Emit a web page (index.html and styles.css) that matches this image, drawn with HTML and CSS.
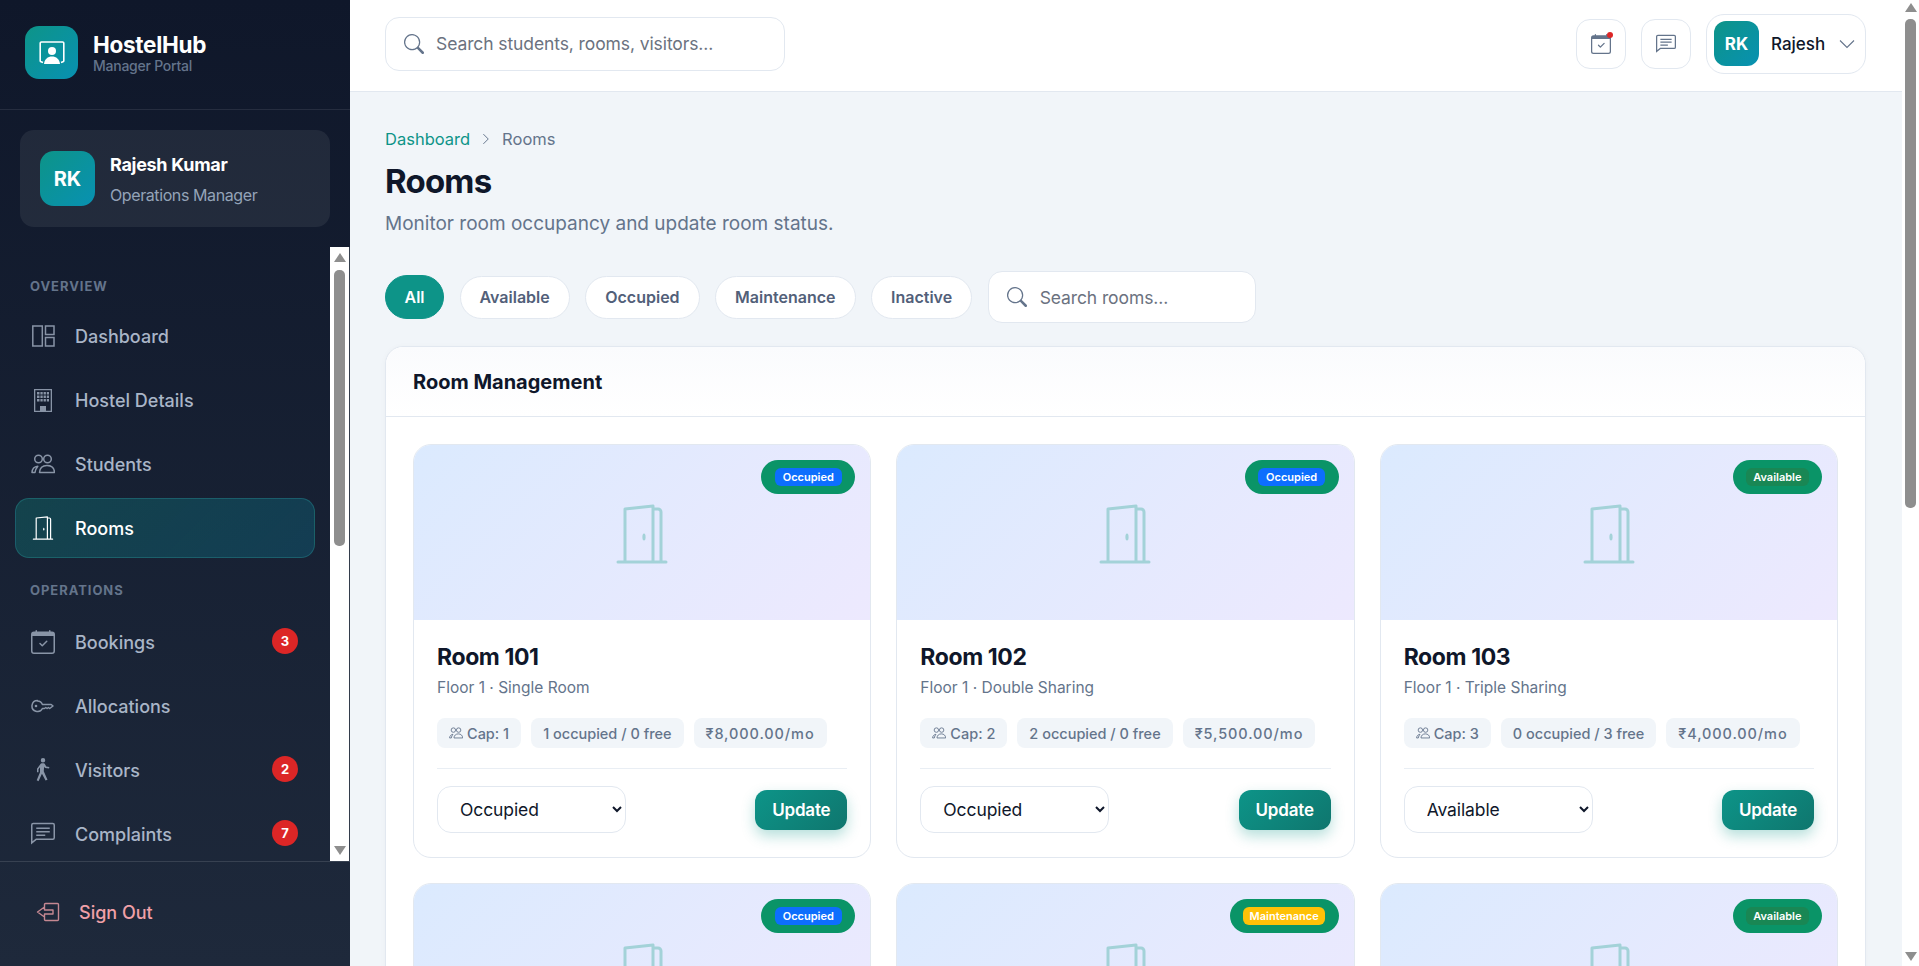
FILE: index.html
```html
<!DOCTYPE html>
<html lang="en">
<head>
<meta charset="utf-8">
<title>Rooms - HostelHub</title>
<link rel="stylesheet" href="styles.css">
</head>
<body>
<svg class="defs" width="0" height="0" aria-hidden="true">
  <symbol id="i-door" viewBox="0 0 52 60"><path fill="none" stroke="currentColor" stroke-width="3" stroke-linecap="round" stroke-linejoin="round" d="M2 58h48M9 58V5l28-3v56M37 5h5a3 3 0 0 1 3 3v50"/><ellipse cx="28" cy="33" rx="1.600" ry="3.500" fill="currentColor"/></symbol>
  <symbol id="i-people" viewBox="0 0 24 24"><g fill="none" stroke="currentColor" stroke-width="1.500" stroke-linejoin="round"><circle cx="7.500" cy="7" r="3.800"/><circle cx="16.500" cy="7" r="3.800"/><path d="M8.500 20.500c.3-4.500 3.300-7 7.500-7s7.300 2.500 7.500 7z"/><path d="M1 20.500c.2-3.500 2.500-6 5.800-6.300-1.500 1.800-2.500 3.800-2.800 6.300z"/></g></symbol>
  <symbol id="i-chat" viewBox="0 0 16 16"><path fill="currentColor" d="M14.500 1.500h-13a.5.5 0 0 0-.5.5v10.800L3.300 11h11.200a.5.5 0 0 0 .5-.5V2a.5.500 0 0 0-.5-.5M1.500.5h13A1.500 1.500 0 0 1 16 2v8.500a1.500 1.500 0 0 1-1.500 1.500H3.700L0 15V2A1.500 1.500 0 0 1 1.500.5M3.500 3.700h9v1h-9zm0 2.300h9v1h-9zm0 2.300h6v1h-6z"/></symbol>
  <symbol id="i-cal" viewBox="0 0 16 16"><path fill="currentColor" d="M10.854 7.146a.5.5 0 0 1 0 .708l-3 3a.5.5 0 0 1-.708 0l-1.500-1.500a.5.500 0 1 1 .708-.708L7.500 9.793l2.646-2.647a.5.500 0 0 1 .708 0"/><path fill="currentColor" d="M3.500 0a.5.500 0 0 1 .5.500V1h8V.500a.5.500 0 0 1 1 0V1h1a2 2 0 0 1 2 2v11a2 2 0 0 1-2 2H2a2 2 0 0 1-2-2V3a2 2 0 0 1 2-2h1V.500a.5.500 0 0 1 .5-.5M1 4v10a1 1 0 0 0 1 1h12a1 1 0 0 0 1-1V4z"/></symbol>
  <symbol id="i-search" viewBox="0 0 16 16"><path fill="currentColor" d="M11.742 10.344a6.500 6.500 0 1 0-1.397 1.398h-.001q.044.060.098.115l3.850 3.850a1 1 0 0 0 1.415-1.414l-3.850-3.850a1 1 0 0 0-.115-.1zM12 6.500a5.500 5.500 0 1 1-11 0 5.500 5.500 0 0 1 11 0"/></symbol>
</svg>

<div class="app">
  <aside class="sidebar">
    <div class="brand">
      <div class="brand-logo">
        <svg viewBox="0 0 26 24" width="26" height="24"><path fill="none" stroke="#fff" stroke-width="1.600" stroke-linejoin="round" d="M4 21.500 2 20.800a1 1 0 0 1-.8-1V2.200a1.200 1.200 0 0 1 1.200-1.200h21.200a1.200 1.200 0 0 1 1.200 1.200v17.600a1 1 0 0 1-.8 1l-2 .7"/><circle cx="13" cy="10" r="4" fill="#fff"/><path fill="#fff" d="M5 23c.5-5 3.800-7.500 8-7.500s7.500 2.500 8 7.500z"/></svg>
      </div>
      <div class="brand-text">
        <div class="brand-name">HostelHub</div>
        <div class="brand-sub">Manager Portal</div>
      </div>
    </div>

    <div class="profile">
      <div class="avatar avatar-lg">RK</div>
      <div class="profile-text">
        <div class="profile-name">Rajesh Kumar</div>
        <div class="profile-role">Operations Manager</div>
      </div>
    </div>

    <div class="nav-area">
      <nav class="nav">
        <div class="nav-label">OVERVIEW</div>
        <a class="nav-item"><svg class="nav-icon" viewBox="0 0 24 24"><path fill="none" stroke="currentColor" stroke-width="1.500" d="M1.800 2h9.500v20H1.800zM14.500 2h8.500v8.500h-8.500zM14.500 13.500h8.500V22h-8.500z"/></svg><span>Dashboard</span></a>
        <a class="nav-item"><svg class="nav-icon" viewBox="0 0 24 24"><path fill="currentColor" fill-rule="evenodd" d="M3 1h18v23H3zm1.300 1.300v20.400h4.700V18h6v4.700h4.700V2.300z"/><path fill="currentColor" d="M6 4h2.500v2.500H6zm3.400 0h2.300v2.500H9.400zm3.200 0h2.300v2.500h-2.300zm3.200 0H18v2.500h-2.200zM6 7.500h2.500V10H6zm3.400 0h2.300V10H9.400zm3.200 0h2.300V10h-2.300zm3.200 0H18V10h-2.200zM6 11h2.500v2.500H6zm3.400 0h2.300v2.500H9.400zm3.200 0h2.300v2.500h-2.300zm3.200 0H18v2.500h-2.200zM9 18h6v6H9z"/></svg><span>Hostel Details</span></a>
        <a class="nav-item"><svg class="nav-icon"><use href="#i-people"/></svg><span>Students</span></a>
        <a class="nav-item active"><svg class="nav-icon"><use href="#i-door"/></svg><span>Rooms</span></a>
        <div class="nav-label nav-label-2">OPERATIONS</div>
        <a class="nav-item"><svg class="nav-icon"><use href="#i-cal"/></svg><span>Bookings</span><b class="badge">3</b></a>
        <a class="nav-item"><svg class="nav-icon" viewBox="0 0 24 24"><path fill="none" stroke="currentColor" stroke-width="1.500" stroke-linejoin="round" d="M6.500 6.500a5.500 5.500 0 1 0 4.900 8h2.100l1.300-1 1.300 1 1.300-1 1.300 1 1.300-1 2-1.500-1.800-1.500H11.400a5.500 5.500 0 0 0-4.900-3.500Z"/><circle cx="5" cy="12" r="1.300" fill="currentColor"/></svg><span>Allocations</span></a>
        <a class="nav-item"><svg class="nav-icon" viewBox="0 0 16 16"><path fill="currentColor" d="M9.500 1.500a1.500 1.500 0 1 1-3 0 1.500 1.500 0 0 1 3 0M6.440 3.752A.75.75 0 0 1 7 3.500h1.500a.75.75 0 0 1 .654.382l1.026 1.814 2.070.363-.2 1-2.700-.4-.6-.9-.25 3 2.500 5.800-1.300.5L7.300 10.500l-2.300 5-1.200-.6L6 9.500V6.200l-1 1.300v2H4V7.200z"/></svg><span>Visitors</span><b class="badge">2</b></a>
        <a class="nav-item"><svg class="nav-icon"><use href="#i-chat"/></svg><span>Complaints</span><b class="badge">7</b></a>
      </nav>
      <div class="scrollbar sidebar-scroll">
        <i class="arrow-up"></i>
        <div class="track"><div class="thumb"></div></div>
        <i class="arrow-down"></i>
      </div>
    </div>

    <div class="signout">
      <svg class="signout-icon" viewBox="0 0 24 20" width="24" height="20"><path fill="none" stroke="currentColor" stroke-width="1.400" stroke-linejoin="round" stroke-linecap="round" d="M8.500 5V2.500a1 1 0 0 1 1-1h12a1 1 0 0 1 1 1v15a1 1 0 0 1-1 1h-12a1 1 0 0 1-1-1V15M8.500 5 1.500 10l7 5v-3h8.500V8H8.500z"/></svg>
      <span>Sign Out</span>
    </div>
  </aside>

  <div class="main-col">
    <header class="topbar">
      <div class="top-search">
        <svg class="search-icon"><use href="#i-search"/></svg>
        <span>Search students, rooms, visitors...</span>
      </div>
      <div class="top-actions">
        <button class="icon-btn"><svg width="20" height="20"><use href="#i-cal"/></svg><i class="dot"></i></button>
        <button class="icon-btn"><svg width="20" height="20"><use href="#i-chat"/></svg></button>
        <div class="user-chip">
          <div class="avatar avatar-sm">RK</div>
          <span class="user-name">Rajesh</span>
          <svg class="chev" viewBox="0 0 16 16" width="16" height="16"><path fill="none" stroke="currentColor" stroke-width="1.100" d="M1 4.500 8 11.500 15 4.500"/></svg>
        </div>
      </div>
    </header>

    <main class="content">
      <div class="crumbs">
        <span class="crumb-link">Dashboard</span>
        <svg viewBox="0 0 16 16" width="12" height="12"><path fill="none" stroke="currentColor" stroke-width="1.300" d="M4.500 1.500 11 8l-6.500 6.500"/></svg>
        <span>Rooms</span>
      </div>
      <h1 class="page-title">Rooms</h1>
      <p class="page-sub">Monitor room occupancy and update room status.</p>

      <div class="filters">
        <button class="pill pill-active">All</button>
        <button class="pill">Available</button>
        <button class="pill">Occupied</button>
        <button class="pill">Maintenance</button>
        <button class="pill">Inactive</button>
        <div class="filter-search">
          <svg class="search-icon"><use href="#i-search"/></svg>
          <span>Search rooms...</span>
        </div>
      </div>

      <section class="panel">
        <div class="panel-head">Room Management</div>
        <div class="room-grid">

          <article class="room">
            <div class="room-img"><span class="status"><em class="st-occ">Occupied</em></span><svg class="door"><use href="#i-door"/></svg></div>
            <div class="room-body">
              <h3>Room 101</h3>
              <p class="room-sub">Floor 1 · Single Room</p>
              <div class="chips"><span class="chip"><svg width="14" height="14"><use href="#i-people"/></svg>Cap: 1</span><span class="chip">1 occupied / 0 free</span><span class="chip chip-price">₹8,000.00/mo</span></div>
              <div class="room-actions"><select class="status-select"><option selected>Occupied</option><option>Available</option></select><button class="update">Update</button></div>
            </div>
          </article>

          <article class="room">
            <div class="room-img"><span class="status"><em class="st-occ">Occupied</em></span><svg class="door"><use href="#i-door"/></svg></div>
            <div class="room-body">
              <h3>Room 102</h3>
              <p class="room-sub">Floor 1 · Double Sharing</p>
              <div class="chips"><span class="chip"><svg width="14" height="14"><use href="#i-people"/></svg>Cap: 2</span><span class="chip">2 occupied / 0 free</span><span class="chip chip-price">₹5,500.00/mo</span></div>
              <div class="room-actions"><select class="status-select"><option selected>Occupied</option><option>Available</option></select><button class="update">Update</button></div>
            </div>
          </article>

          <article class="room">
            <div class="room-img"><span class="status"><em class="st-av">Available</em></span><svg class="door"><use href="#i-door"/></svg></div>
            <div class="room-body">
              <h3>Room 103</h3>
              <p class="room-sub">Floor 1 · Triple Sharing</p>
              <div class="chips"><span class="chip"><svg width="14" height="14"><use href="#i-people"/></svg>Cap: 3</span><span class="chip">0 occupied / 3 free</span><span class="chip chip-price">₹4,000.00/mo</span></div>
              <div class="room-actions"><select class="status-select"><option selected>Available</option><option>Occupied</option></select><button class="update">Update</button></div>
            </div>
          </article>

          <article class="room">
            <div class="room-img"><span class="status"><em class="st-occ">Occupied</em></span><svg class="door"><use href="#i-door"/></svg></div>
          </article>
          <article class="room">
            <div class="room-img"><span class="status"><em class="st-mnt">Maintenance</em></span><svg class="door"><use href="#i-door"/></svg></div>
          </article>
          <article class="room">
            <div class="room-img"><span class="status"><em class="st-av">Available</em></span><svg class="door"><use href="#i-door"/></svg></div>
          </article>

        </div>
      </section>
    </main>
  </div>

  <div class="scrollbar page-scroll">
    <i class="arrow-up"></i>
    <div class="track"><div class="thumb"></div></div>
    <i class="arrow-down"></i>
  </div>
</div>
</body>
</html>
```
FILE: styles.css
```css
* { box-sizing: border-box; }
html, body { margin: 0; height: 100%; overflow: hidden; }
body { font-family: Inter, "Open Sans", "Liberation Sans", sans-serif; color: #0f172a; background: #f1f5f9; }
.defs { position: absolute; }
button, select { font-family: inherit; }

.app { display: flex; width: 1919px; height: 966px; overflow: hidden; }

/* Sidebar */
.sidebar { width: 350px; flex: none; height: 966px; display: flex; flex-direction: column; background: linear-gradient(180deg, #0f172a 0%, #1e293b 100%); }
.brand { height: 110px; flex: none; display: flex; align-items: center; gap: 15px; padding: 0 25px 4px; border-bottom: 1px solid rgba(255,255,255,.09); }
.brand-logo { width: 53px; height: 53px; border-radius: 14px; background: linear-gradient(135deg, #0d9488, #0891b2); display: flex; align-items: center; justify-content: center; }
.brand-name { font-size: 22.5px; font-weight: 700; color: #fff; line-height: 26px; letter-spacing: -.3px; }
.brand-sub { font-size: 14px; font-weight: 500; color: #64748b; line-height: 16px; letter-spacing: -.25px; }
.profile { margin: 20px 20px 0; height: 97px; flex: none; display: flex; align-items: center; gap: 15px; padding: 0 20px; border-radius: 14px; background: rgba(255,255,255,.07); }
.avatar { background: linear-gradient(135deg, #0d9488, #0891b2); color: #fff; font-weight: 700; display: flex; align-items: center; justify-content: center; }
.avatar-lg { width: 55px; height: 55px; border-radius: 14px; font-size: 20px; }
.profile-text { padding-top: 1px; }
.profile-name { font-size: 18px; font-weight: 700; color: #fff; line-height: 22px; letter-spacing: -.3px; }
.profile-role { font-size: 16px; color: #94a3b8; line-height: 20px; margin-top: 9px; letter-spacing: -.4px; }

.nav-area { flex: 1; min-height: 0; display: flex; margin-top: 20px; }
.nav { flex: 1; min-width: 0; padding: 31px 15px 0; overflow: hidden; }
.nav-label { font-size: 13px; font-weight: 700; color: #64748b; letter-spacing: .95px; padding-left: 15px; height: 16px; line-height: 16px; margin-bottom: 12px; }
.nav-label-2 { margin-top: 24px; margin-bottom: 14px; }
.nav-item { height: 60px; margin-bottom: 4px; display: flex; align-items: center; gap: 20px; padding: 0 16px 0 15px; color: #a9b5c7; font-size: 18px; font-weight: 500; border: 1px solid transparent; border-radius: 14px; }
.nav-item span { flex: 1; }
.nav-icon { width: 24px; height: 24px; flex: none; opacity: .78; }
.nav-item.active { background: linear-gradient(135deg, rgba(13,148,136,.3), rgba(8,145,178,.25)); border-color: rgba(45,170,170,.3); color: #fff; }
.nav-item.active .nav-icon { opacity: 1; }
.badge { width: 26px; height: 26px; border-radius: 50%; background: #dc2626; color: #fff; font-size: 13px; font-weight: 700; display: flex; align-items: center; justify-content: center; margin-top: -3px; }
.signout { height: 105px; flex: none; display: flex; align-items: center; gap: 19px; padding: 0 36px 4px; border-top: 1px solid rgba(255,255,255,.12); color: #f0a0a8; font-size: 18px; font-weight: 500; }
.signout-icon { opacity: .8; }

/* Scrollbars */
.scrollbar { flex: none; background: #fff; display: flex; flex-direction: column; align-items: center; }
.sidebar-scroll { width: 20px; border-right: 1px solid #333c4b; }
.page-scroll { width: 17px; }
.track { flex: 1; width: 100%; padding: 0 3px; min-height: 0; }
.thumb { background: #8e8e8e; width: 100%; border-radius: 5px; }
.sidebar-scroll .track { padding: 0 4px; }
.sidebar-scroll .thumb { height: 276px; }
.page-scroll .thumb { height: 489px; }
.arrow-up, .arrow-down { display: block; width: 0; height: 0; border-left: 6px solid transparent; border-right: 6px solid transparent; flex: none; }
.arrow-up { border-bottom: 9px solid #8e8e8e; }
.arrow-down { border-top: 9px solid #8e8e8e; }
.sidebar-scroll .arrow-up { margin: 6px 0 8px; }
.sidebar-scroll .arrow-down { margin: 4px 0 6px; }
.page-scroll .arrow-up { margin: 3px 0 7px; }
.page-scroll .arrow-down { margin: 4px 0 5px; }

/* Top bar */
.main-col { flex: 1; min-width: 0; display: flex; flex-direction: column; }
.topbar { height: 92px; flex: none; background: #fff; border-bottom: 1px solid #e2e8f0; display: flex; align-items: center; justify-content: space-between; padding: 0 36px 0 35px; }
.top-search { width: 400px; height: 54px; margin-top: -4px; border: 1px solid #e2e8f0; border-radius: 14px; display: flex; align-items: center; gap: 12px; padding: 0 18px; color: #6b7280; font-size: 17.5px; background: #fff; letter-spacing: -.1px; }
.search-icon { width: 20px; height: 20px; flex: none; color: #64748b; }
.top-actions { display: flex; align-items: center; gap: 15px; margin-top: -4px; }
.icon-btn { position: relative; width: 50px; height: 50px; border: 1px solid #e2e8f0; border-radius: 14px; background: #fff; color: #64748b; display: flex; align-items: center; justify-content: center; padding: 0; }
.dot { position: absolute; top: 12px; right: 12px; width: 6px; height: 6px; border-radius: 50%; background: #dc2626; }
.user-chip { height: 60px; width: 160px; border: 1px solid #e2e8f0; border-radius: 18px; display: flex; align-items: center; gap: 12px; padding: 0 7px; background: #fff; }
.avatar-sm { width: 45px; height: 45px; border-radius: 12px; font-size: 17px; flex: none; }
.user-name { font-size: 17px; font-weight: 500; color: #0f172a; flex: 1; }
.chev { color: #64748b; margin-right: 3px; }

/* Content */
.content { flex: 1; min-height: 0; padding: 37px 36px 0 35px; overflow: hidden; }
.crumbs { display: flex; align-items: center; gap: 10px; font-size: 16.5px; color: #64748b; height: 20px; }
.crumb-link { color: #0d9488; }
.page-title { margin: 11px 0 0; font-size: 33px; line-height: 42px; font-weight: 700; color: #0f172a; letter-spacing: -.8px; }
.page-sub { margin: 9px 0 0; font-size: 19px; line-height: 26px; color: #64748b; }
.filters { display: flex; align-items: center; gap: 15.5px; margin-top: 34px; }
.pill { height: 43px; border: 1px solid #e2e8f0; border-radius: 22px; background: #fff; color: #526079; font-size: 16px; font-weight: 600; padding: 0 19px; }
.pill-active { height: 44px; padding: 0 18.5px; background: #0d9488; border-color: #0d9488; color: #fff; }
.filter-search { width: 268px; height: 52px; border: 1px solid #e2e8f0; border-radius: 14px; background: #fff; display: flex; align-items: center; gap: 13px; padding: 0 18px; color: #6b7280; font-size: 17.5px; letter-spacing: -.1px; }

.panel { margin-top: 23px; height: 800px; background: #fff; border: 1px solid #e2e8f0; border-radius: 18px; box-shadow: 0 1px 6px rgba(15,23,42,.03); }
.panel-head { height: 70px; border-bottom: 1px solid #e2e8f0; display: flex; align-items: center; padding: 0 27px; font-size: 20px; font-weight: 700; color: #0f172a; background: linear-gradient(180deg, #fafbfd, #fff); border-radius: 18px 18px 0 0; }
.room-grid { display: grid; grid-template-columns: repeat(3, 1fr); gap: 25px; padding: 27px 27px 0; }

.room { border: 1px solid #e2e8f0; border-radius: 18px; background: #fff; overflow: hidden; }
.room-img { position: relative; height: 176px; margin: -1px -1px 0; background: linear-gradient(135deg, #dbeafe, #ede9fe); display: flex; align-items: center; justify-content: center; }
.door { width: 52px; height: 60px; color: #a3d2d8; margin-top: 4px; }
.status { position: absolute; top: 16px; right: 16px; height: 34px; border-radius: 17px; padding: 0 13.5px; display: flex; align-items: center; background-color: #0a9467; }
.status em { font-style: normal; font-size: 11px; font-weight: 600; color: #fff; padding: 0 8px; height: 18px; border-radius: 6px; line-height: 18px; }
.status .st-occ { background: #0d6efd; }
.status .st-av { background: #198754; padding: 0 7px; }
.status .st-mnt { background: #ffc107; padding: 0 6.5px; }
.room-body { padding: 23px 23px 24px; }
.room h3 { margin: 0; font-size: 23px; line-height: 28px; font-weight: 700; color: #0f172a; letter-spacing: -.4px; }
.room-sub { margin: 6px 0 0; font-size: 15.5px; line-height: 22px; color: #64748b; }
.chips { display: flex; gap: 10px; margin-top: 19px; }
.chip { height: 30px; display: flex; align-items: center; gap: 4px; padding: 0 12px; background: #f1f5f9; border-radius: 8px; color: #64748b; font-size: 14.5px; font-weight: 500; white-space: nowrap; }
.chip-price { letter-spacing: .9px; }
.room-actions { display: flex; align-items: center; justify-content: space-between; margin-top: 20px; padding-top: 17px; border-top: 1px solid #e9eef4; }
.status-select { width: 189px; height: 47px; border: 1px solid #e2e8f0; border-radius: 14px; background: #fff; padding: 0 18px; font-size: 17.5px; color: #0f172a; letter-spacing: -.1px; }
.update { width: 92px; height: 40px; border: none; border-radius: 12px; background: linear-gradient(135deg, #0d9488, #0f766e); color: #fff; font-size: 17px; font-weight: 600; box-shadow: 0 6px 14px rgba(13,148,136,.3); letter-spacing: -.2px; }
```
